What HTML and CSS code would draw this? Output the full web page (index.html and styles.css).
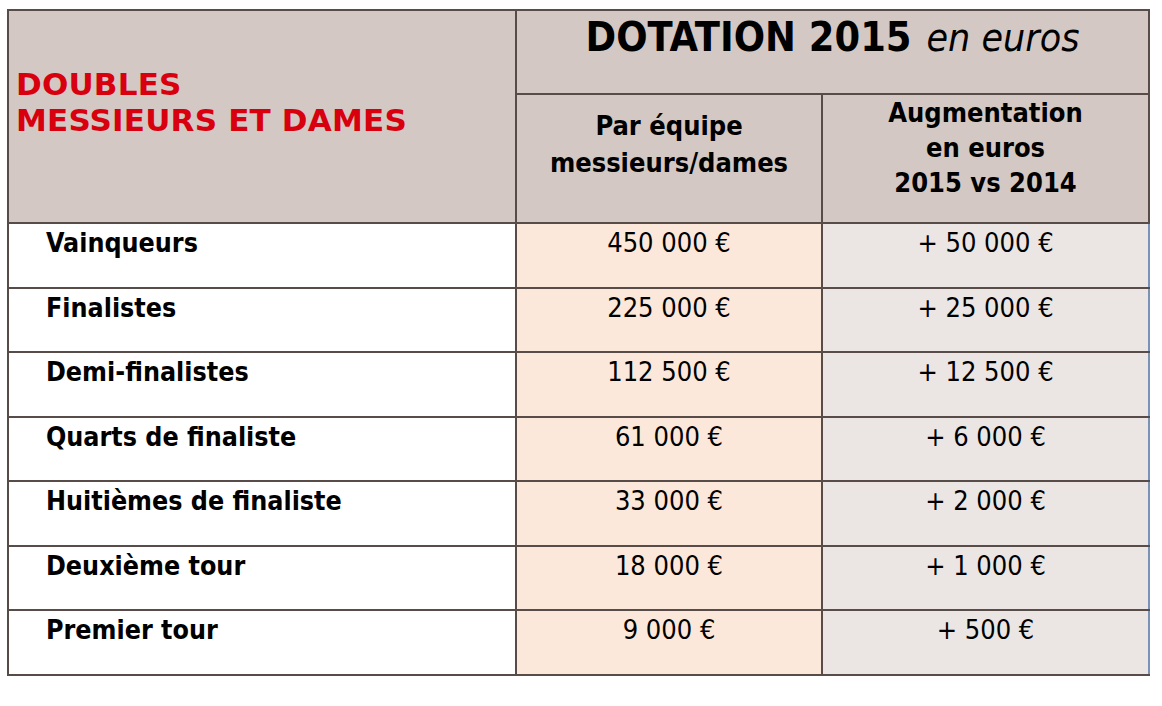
FILE: index.html
```html
<!DOCTYPE html>
<html lang="fr">
<head>
<meta charset="utf-8">
<title>Dotation 2015 - Doubles messieurs et dames</title>
<link rel="stylesheet" href="styles.css">
</head>
<body>
<table class="prize">
  <colgroup>
    <col class="c-label">
    <col class="c-team">
    <col class="c-inc">
  </colgroup>
  <thead>
    <tr class="h1">
      <th class="title" rowspan="2"><span class="red">DOUBLES<br>MESSIEURS ET DAMES</span></th>
      <th class="dot" colspan="2"><span class="dot-b">DOTATION 2015</span><span class="dot-i">en euros</span></th>
    </tr>
    <tr class="h2">
      <th class="sub sub-team">Par équipe<br>messieurs/dames</th>
      <th class="sub sub-inc">Augmentation<br>en euros<br>2015 vs 2014</th>
    </tr>
  </thead>
  <tbody>
    <tr><td class="lab">Vainqueurs</td><td class="team">450 000 €</td><td class="inc">+ 50 000 €</td></tr>
    <tr><td class="lab">Finalistes</td><td class="team">225 000 €</td><td class="inc">+ 25 000 €</td></tr>
    <tr><td class="lab">Demi-finalistes</td><td class="team">112 500 €</td><td class="inc">+ 12 500 €</td></tr>
    <tr><td class="lab">Quarts de finaliste</td><td class="team">61 000 €</td><td class="inc">+ 6 000 €</td></tr>
    <tr><td class="lab">Huitièmes de finaliste</td><td class="team">33 000 €</td><td class="inc">+ 2 000 €</td></tr>
    <tr><td class="lab">Deuxième tour</td><td class="team">18 000 €</td><td class="inc">+ 1 000 €</td></tr>
    <tr><td class="lab">Premier tour</td><td class="team">9 000 €</td><td class="inc">+ 500 €</td></tr>
  </tbody>
</table>
</body>
</html>
```
FILE: styles.css
```css
html, body {
  margin: 0;
  padding: 0;
  background: #ffffff;
}

body {
  font-family: "DejaVu Sans Condensed", "DejaVu Sans", sans-serif;
  color: #000;
}

.prize {
  margin: 9px 0 0 7px;
  width: 1141px;
  border-collapse: collapse;
  table-layout: fixed;
  box-shadow: 0 5px 3px -3px rgba(0, 0, 0, 0.12);
}

.c-label { width: 508px; }
.c-team { width: 306px; }
.c-inc { width: 327px; }

.prize th,
.prize td {
  border: 2px solid #574c48;
  padding: 0;
  vertical-align: top;
}

.prize thead th {
  background: #d3c8c3;
}

.prize .h1 { height: 84px; }
.prize .h2 { height: 129px; }

.prize th.title {
  text-align: left;
  padding: 55px 0 0 7px;
}

.red {
  font-family: "DejaVu Sans", sans-serif;
  color: #d8000e;
  font-weight: bold;
  font-size: 31px;
  line-height: 36px;
  letter-spacing: 0.2px;
}

.prize th.dot {
  text-align: center;
  padding-top: 3px;
}

.dot-b {
  font-weight: bold;
  font-size: 41px;
  line-height: 46px;
}

.dot-i {
  font-style: italic;
  font-weight: normal;
  font-size: 39px;
  line-height: 46px;
  margin-left: 15px;
}

.prize th.sub {
  font-weight: bold;
  font-size: 27px;
  text-align: center;
}

.prize th.sub-team {
  line-height: 37px;
  padding-top: 12px;
}

.prize th.sub-inc {
  line-height: 35px;
  padding-top: 0;
}

.prize tbody tr { height: 64.57px; }

.prize td.lab {
  background: #ffffff;
  font-weight: bold;
  font-size: 26.6px;
  line-height: 34px;
  padding: 2px 0 0 37px;
}

.prize td.team,
.prize td.inc {
  font-size: 27px;
  line-height: 34px;
  text-align: center;
  padding-top: 2px;
}

.prize td.team { background: #fce8da; }
.prize td.inc {
  background: #ebe6e4;
  border-right-color: #7a92b8;
}
```
